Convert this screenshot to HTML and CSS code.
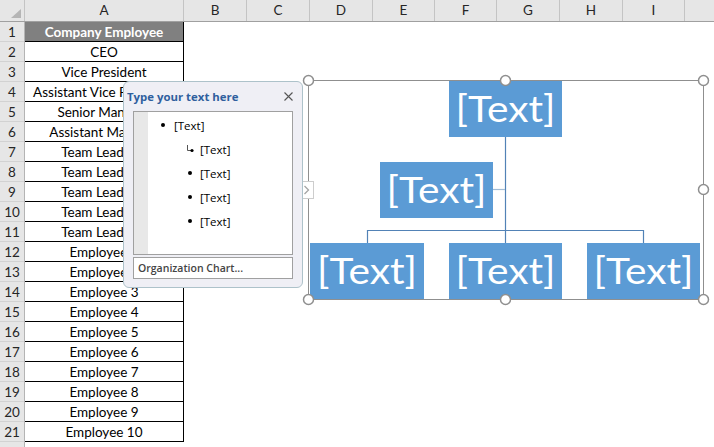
FILE: index.html
```html
<!DOCTYPE html>
<html lang="en">
<head>
  <meta charset="UTF-8">
  <title>Org chart</title>
  <link rel="stylesheet" href="styles.css">
</head>
<body>

  <div class="sheet">

    <!-- column letters -->
    <div class="col-heads">
      <div class="corner"><span class="corner-tri"></span></div>
      <div class="col-head col-a">A</div>
      <div class="col-head w63">B</div>
      <div class="col-head w63">C</div>
      <div class="col-head w63">D</div>
      <div class="col-head w62">E</div>
      <div class="col-head w62">F</div>
      <div class="col-head w63">G</div>
      <div class="col-head w63">H</div>
      <div class="col-head w62">I</div>
      <div class="col-head rest"></div>
    </div>

    <div class="grid">
      <div class="row-heads">
        <div class="row-head">1</div>
        <div class="row-head">2</div>
        <div class="row-head">3</div>
        <div class="row-head">4</div>
        <div class="row-head">5</div>
        <div class="row-head">6</div>
        <div class="row-head">7</div>
        <div class="row-head">8</div>
        <div class="row-head">9</div>
        <div class="row-head">10</div>
        <div class="row-head">11</div>
        <div class="row-head">12</div>
        <div class="row-head">13</div>
        <div class="row-head">14</div>
        <div class="row-head">15</div>
        <div class="row-head">16</div>
        <div class="row-head">17</div>
        <div class="row-head">18</div>
        <div class="row-head">19</div>
        <div class="row-head">20</div>
        <div class="row-head">21</div>
        <div class="row-head"></div>
      </div>

      <div class="col-cells">
        <div class="cell title">Company Employee</div>
        <div class="cell">CEO</div>
        <div class="cell">Vice President</div>
        <div class="cell">Assistant Vice President</div>
        <div class="cell">Senior Manager</div>
        <div class="cell">Assistant Manager</div>
        <div class="cell">Team Leader 1</div>
        <div class="cell">Team Leader 2</div>
        <div class="cell">Team Leader 3</div>
        <div class="cell">Team Leader 4</div>
        <div class="cell">Team Leader 5</div>
        <div class="cell">Employee 1</div>
        <div class="cell">Employee 2</div>
        <div class="cell">Employee 3</div>
        <div class="cell">Employee 4</div>
        <div class="cell">Employee 5</div>
        <div class="cell">Employee 6</div>
        <div class="cell">Employee 7</div>
        <div class="cell">Employee 8</div>
        <div class="cell">Employee 9</div>
        <div class="cell">Employee 10</div>
      </div>
    </div>

    <!-- SmartArt org chart (coordinates are page pixels) -->
    <div class="smartart">
      <svg width="412" height="232" viewBox="302 74 412 232">
        <rect class="frame" x="308.5" y="80.5" width="395" height="219"/>

        <line class="link" x1="505.5" y1="137" x2="505.5" y2="243"/>
        <line class="link-assist" x1="493" y1="189.5" x2="505" y2="189.5"/>
        <line class="link" x1="367" y1="230.5" x2="644" y2="230.5"/>
        <line class="link" x1="367.5" y1="230" x2="367.5" y2="243"/>
        <line class="link" x1="643.5" y1="230" x2="643.5" y2="243"/>

        <rect class="node" x="449" y="81" width="113" height="56"/>
        <rect class="node" x="380" y="162" width="113" height="56"/>
        <rect class="node" x="310" y="243" width="114" height="56"/>
        <rect class="node" x="449" y="243" width="113" height="56"/>
        <rect class="node" x="587" y="243" width="113" height="56"/>

        <text class="node-text" x="505.5" y="122" textLength="100" lengthAdjust="spacingAndGlyphs">[Text]</text>
        <text class="node-text" x="436.5" y="203" textLength="100" lengthAdjust="spacingAndGlyphs">[Text]</text>
        <text class="node-text" x="367" y="284" textLength="100" lengthAdjust="spacingAndGlyphs">[Text]</text>
        <text class="node-text" x="505.5" y="284" textLength="100" lengthAdjust="spacingAndGlyphs">[Text]</text>
        <text class="node-text" x="643.5" y="284" textLength="100" lengthAdjust="spacingAndGlyphs">[Text]</text>

        <circle class="handle" cx="308.5" cy="80.5" r="5"/>
        <circle class="handle" cx="505.5" cy="80.5" r="5"/>
        <circle class="handle" cx="703.5" cy="80.5" r="5"/>
        <circle class="handle" cx="703.5" cy="189.5" r="5"/>
        <circle class="handle" cx="308.5" cy="299.5" r="5"/>
        <circle class="handle" cx="505.5" cy="299.5" r="5"/>
        <circle class="handle" cx="703.5" cy="299.5" r="5"/>

        <rect class="pane-tab" x="302.5" y="181.5" width="11" height="17"/>
        <path class="pane-tab-arrow" d="M304.5 186 L308.5 190 L304.5 194"/>
      </svg>
    </div>

    <!-- text pane -->
    <div class="text-pane">
      <div class="pane-head">
        <span class="pane-title">Type your text here</span>
        <svg class="pane-close" width="9" height="9" viewBox="0 0 9 9">
          <path d="M0.5 0.5 L8.5 8.5 M8.5 0.5 L0.5 8.5"/>
        </svg>
      </div>
      <ul class="pane-list">
        <li class="lvl1"><span class="dot"></span>[Text]</li>
        <li class="lvl2 assist">
          <svg class="assist-mark" width="8" height="8" viewBox="0 0 8 8">
            <path d="M1.5 0 V5.5 H5"/>
            <circle cx="6" cy="5.5" r="1.6"/>
          </svg>[Text]</li>
        <li class="lvl2"><span class="dot"></span>[Text]</li>
        <li class="lvl2"><span class="dot"></span>[Text]</li>
        <li class="lvl2"><span class="dot"></span>[Text]</li>
      </ul>
      <div class="pane-foot">Organization Chart...</div>
    </div>

  </div>

</body>
</html>
```

FILE: styles.css
```css
* {
  margin: 0;
  padding: 0;
  box-sizing: border-box;
}

html, body {
  width: 714px;
  height: 447px;
  overflow: hidden;
  background-color: #fff;
}

body {
  font-family: Lato, "Open Sans", sans-serif;
  font-size: 13.5px;
  color: #000;
}

.sheet {
  position: relative;
  width: 714px;
  height: 447px;
}

/* Column headers */
.col-heads {
  display: flex;
  height: 22px;
  background-color: #e6e6e6;
  border-bottom: 1px solid #a0a0a0;
}

.corner {
  width: 25px;
  border-right: 1px solid #c4c4c4;
  display: flex;
  align-items: flex-end;
  justify-content: flex-end;
  padding: 0 3px 3px 0;
}

.corner-tri {
  width: 0;
  height: 0;
  border-left: 10px solid transparent;
  border-bottom: 9px solid #b5b5b5;
}

.col-head {
  border-right: 1px solid #c4c4c4;
  text-align: center;
  line-height: 21px;
  color: #262626;
}

.col-a { width: 159px; }
.w63 { width: 63px; }
.w62 { width: 62px; }
.rest { flex: 1; border-right: none; }

/* Body */
.grid {
  display: flex;
}

.row-heads {
  width: 25px;
  background-color: #e6e6e6;
  border-right: 1px solid #b4b4b4;
}

.row-head {
  height: 20px;
  border-bottom: 1px solid #d2d2d2;
  text-align: center;
  line-height: 21px;
  color: #262626;
  overflow: hidden;
}

.col-cells {
  width: 159px;
}

.cell {
  height: 20px;
  border-right: 1px solid #000;
  border-bottom: 1px solid #000;
  text-align: center;
  line-height: 21px;
  white-space: nowrap;
  overflow: hidden;
}

.cell.title {
  background-color: #808080;
  color: #fff;
  font-weight: bold;
}

/* SmartArt */
.smartart {
  position: absolute;
  left: 302px;
  top: 74px;
  width: 412px;
  height: 232px;
}

.smartart svg {
  display: block;
}

.frame {
  fill: #fff;
  stroke: #8f8f8f;
  stroke-width: 1;
}

.node {
  fill: #5b9bd5;
}

.node-text {
  font-family: Lato, "Open Sans", sans-serif;
  font-size: 37px;
  fill: #fff;
  text-anchor: middle;
}

.link {
  stroke: #5282b6;
  stroke-width: 1.2;
}

.link-assist {
  stroke: #a3bdd6;
  stroke-width: 1.2;
}

.handle {
  fill: #fff;
  stroke: #8f8f8f;
  stroke-width: 1.5;
}

.pane-tab {
  fill: #fff;
  stroke: #cdcdcd;
}

.pane-tab-arrow {
  fill: none;
  stroke: #a5a5a5;
  stroke-width: 1.3;
}

/* Text pane */
.text-pane {
  position: absolute;
  left: 123px;
  top: 81px;
  width: 180px;
  height: 207px;
  background-color: #efeff5;
  border: 1px solid #adc2ca;
  border-radius: 6px;
  font-family: "Open Sans", sans-serif;
}

.pane-head {
  height: 29px;
  display: flex;
  align-items: center;
  justify-content: space-between;
  padding: 0 9px 0 3px;
}

.pane-title {
  font-weight: bold;
  font-size: 11.4px;
  color: #2f5f9e;
}

.pane-close path {
  stroke: #555;
  stroke-width: 1.1;
}

.pane-list {
  list-style: none;
  margin: 0 9px;
  height: 144px;
  border: 1px solid #a0a0a0;
  background: linear-gradient(to right, #e8e8e8 14px, #fff 14px);
  padding-top: 1px;
}

.pane-list li {
  height: 24px;
  display: flex;
  align-items: center;
  font-size: 11.5px;
}

.dot {
  width: 4px;
  height: 4px;
  border-radius: 50%;
  background-color: #000;
}

.lvl1 .dot {
  margin: 0 9px 0 27px;
}

.lvl2 .dot {
  margin: 0 8px 0 54px;
}

.assist-mark {
  margin: 0 6px 0 52px;
}

.assist-mark path {
  fill: none;
  stroke: #555;
  stroke-width: 1;
}

.assist-mark circle {
  fill: #000;
}

.pane-foot {
  margin: 2px 9px 0;
  height: 22px;
  border: 1px solid #a0a0a0;
  background-color: #fff;
  padding-left: 4px;
  line-height: 20px;
  font-size: 10.5px;
  font-weight: 600;
  color: #444;
  white-space: nowrap;
}
```
